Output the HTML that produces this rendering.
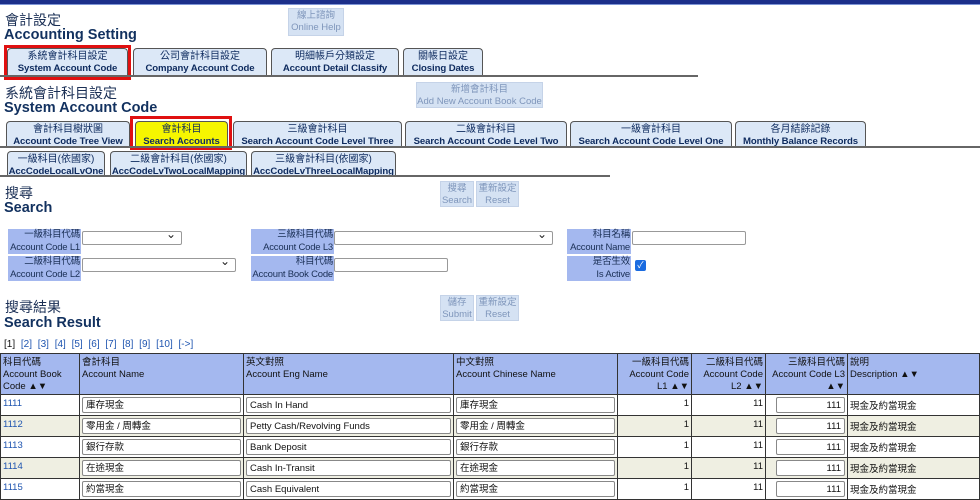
<!DOCTYPE html>
<html><head><meta charset="utf-8"><style>
*{box-sizing:border-box;margin:0;padding:0}
body{width:980px;height:495px;overflow:hidden;background:#fff;font-family:"Liberation Sans","Noto Sans CJK TC",sans-serif;color:#0d2a5e;position:relative}
.a{position:absolute}
.h1{font-size:14px;color:#1a2f55}
.h2{font-size:14.5px;font-weight:bold;color:#12315f}
.tab{position:absolute;background:#dce8f7;border:1px solid #555;border-bottom:none;border-radius:4px 4px 0 0;text-align:center;color:#0d2a5e;line-height:12px;padding-top:2px;white-space:nowrap;overflow:hidden}
.tab .c{font-size:10px}
.tab .e{font-size:9.6px;font-weight:bold;letter-spacing:-0.1px}
.red{position:absolute;border:3px solid #e01010}
.btn{position:absolute;background:#d5e2f3;border:1px solid #c5d3e8;color:#7f96bb;font-size:9.5px;text-align:center;line-height:12px;padding-top:1px;white-space:nowrap}
.line{position:absolute;height:2px;background:#666}
.lab{position:absolute;background:#a4b8ef;font-size:9.5px;text-align:right;color:#1a2f55;line-height:12.5px;padding-right:1px;white-space:nowrap;letter-spacing:-0.2px}
.inp{position:absolute;border:1px solid #999;border-radius:2px;background:#fff;height:14px}
.sel::after{content:"⌄";position:absolute;right:5px;top:-5px;font-size:12px;color:#222}
table{position:absolute;left:0;top:353px;border-collapse:collapse;table-layout:fixed;width:979px}
td,th{border:1px solid #333;font-size:9.5px;font-weight:normal;vertical-align:top;padding:1px 2px;color:#111;text-align:left;white-space:nowrap;overflow:hidden}
th{background:#a4b8ef;height:41px;line-height:12px;padding-top:3px}
th.r{text-align:right}
td{height:21px;padding-top:3px}
tr.alt td{background:#efefe2}
td a{color:#1f55b0;text-decoration:none}
.ti{border:1px solid #888;border-radius:2px;height:16px;background:#fff;font-size:9.5px;padding:2px 3px;margin-top:-1px;line-height:11px}
.num{text-align:right}
</style></head><body>
<div class="a" style="left:0;top:0;width:980px;height:4px;background:#1c2f8a"></div>
<div class="a" style="left:0;top:4px;width:980px;height:1px;background:#7e95d6"></div>

<div class="a h1" style="left:5px;top:10px">會計設定</div>
<div class="a h2" style="left:4px;top:27px">Accounting Setting</div>
<div class="btn" style="left:288px;top:8px;width:56px;height:28px">線上諮詢<br>Online Help</div>

<div class="tab" style="left:7px;top:48px;width:121px;height:29px"><div class="c">系統會計科目設定</div><div class="e">System Account Code</div></div>
<div class="red" style="left:4px;top:45px;width:127px;height:35px"></div>
<div class="tab" style="left:133px;top:48px;width:134px;height:29px"><div class="c">公司會計科目設定</div><div class="e">Company Account Code</div></div>
<div class="tab" style="left:271px;top:48px;width:128px;height:29px"><div class="c">明細帳戶分類設定</div><div class="e">Account Detail Classify</div></div>
<div class="tab" style="left:403px;top:48px;width:80px;height:29px"><div class="c">關帳日設定</div><div class="e">Closing Dates</div></div>
<div class="line" style="left:0;top:75px;width:698px"></div>

<div class="a h1" style="left:5px;top:83px">系統會計科目設定</div>
<div class="a h2" style="left:4px;top:100px">System Account Code</div>
<div class="btn" style="left:416px;top:82px;width:127px;height:26px">新增會計科目<br>Add New Account Book Code</div>

<div class="tab" style="left:6px;top:121px;width:124px;height:27px"><div class="c">會計科目樹狀圖</div><div class="e">Account Code Tree View</div></div>
<div class="tab" style="left:135px;top:121px;width:93px;height:27px;background:#f6f600"><div class="c">會計科目</div><div class="e">Search Accounts</div></div>
<div class="red" style="left:130px;top:116px;width:102px;height:34px"></div>
<div class="tab" style="left:233px;top:121px;width:169px;height:27px"><div class="c">三級會計科目</div><div class="e">Search Account Code Level Three</div></div>
<div class="tab" style="left:405px;top:121px;width:162px;height:27px"><div class="c">二級會計科目</div><div class="e">Search Account Code Level Two</div></div>
<div class="tab" style="left:570px;top:121px;width:162px;height:27px"><div class="c">一級會計科目</div><div class="e">Search Account Code Level One</div></div>
<div class="tab" style="left:735px;top:121px;width:131px;height:27px"><div class="c">各月結餘記錄</div><div class="e">Monthly Balance Records</div></div>
<div class="line" style="left:0;top:146px;width:980px"></div>

<div class="tab" style="left:7px;top:151px;width:98px;height:26px"><div class="c">一級科目(依國家)</div><div class="e">AccCodeLocalLvOne</div></div>
<div class="tab" style="left:110px;top:151px;width:137px;height:26px"><div class="c">二級會計科目(依國家)</div><div class="e">AccCodeLvTwoLocalMapping</div></div>
<div class="tab" style="left:251px;top:151px;width:145px;height:26px"><div class="c">三級會計科目(依國家)</div><div class="e">AccCodeLvThreeLocalMapping</div></div>
<div class="line" style="left:0;top:175px;width:610px"></div>

<div class="a h1" style="left:5px;top:183px">搜尋</div>
<div class="a h2" style="left:4px;top:200px">Search</div>
<div class="btn" style="left:440px;top:181px;width:34px;height:26px">搜尋<br>Search</div>
<div class="btn" style="left:476px;top:181px;width:43px;height:26px">重新設定<br>Reset</div>

<div class="lab" style="left:8px;top:229px;width:73px;height:25px">一級科目代碼<br>Account Code L1</div>
<div class="inp sel" style="left:82px;top:231px;width:100px"></div>
<div class="lab" style="left:8px;top:256px;width:73px;height:25px">二級科目代碼<br>Account Code L2</div>
<div class="inp sel" style="left:82px;top:258px;width:154px"></div>
<div class="lab" style="left:251px;top:229px;width:83px;height:25px">三級科目代碼<br>Account Code L3</div>
<div class="inp sel" style="left:334px;top:231px;width:219px"></div>
<div class="lab" style="left:251px;top:256px;width:83px;height:25px">科目代碼<br>Account Book Code</div>
<div class="inp" style="left:334px;top:258px;width:114px"></div>
<div class="lab" style="left:567px;top:229px;width:64px;height:25px">科目名稱<br>Account Name</div>
<div class="inp" style="left:632px;top:231px;width:114px"></div>
<div class="lab" style="left:567px;top:256px;width:64px;height:25px">是否生效<br>Is Active</div>
<div class="a" style="left:635px;top:260px;width:11px;height:11px;background:#1a6be0;border-radius:2px;color:#fff;font-size:9px;line-height:11px;text-align:center">✓</div>

<div class="a h1" style="left:5px;top:297px">搜尋結果</div>
<div class="a h2" style="left:4px;top:315px">Search Result</div>
<div class="btn" style="left:440px;top:295px;width:34px;height:26px">儲存<br>Submit</div>
<div class="btn" style="left:476px;top:295px;width:43px;height:26px">重新設定<br>Reset</div>

<div class="a" style="left:4px;top:339px;font-size:10px;color:#1f55b0;word-spacing:3px"><span style="color:#111">[1]</span> [2] [3] [4] [5] [6] [7] [8] [9] [10] [-&gt;]</div>

<table>
<colgroup><col style="width:79px"><col style="width:164px"><col style="width:210px"><col style="width:164px"><col style="width:74px"><col style="width:74px"><col style="width:82px"><col style="width:132px"></colgroup>
<tr><th>科目代碼<br>Account Book<br>Code ▲▼</th><th>會計科目<br>Account Name</th><th>英文對照<br>Account Eng Name</th><th>中文對照<br>Account Chinese Name</th><th class="r">一級科目代碼<br>Account Code<br>L1 ▲▼</th><th class="r">二級科目代碼<br>Account Code<br>L2 ▲▼</th><th class="r">三級科目代碼<br>Account Code L3<br>▲▼</th><th>說明<br>Description ▲▼</th></tr>
<tr><td><a>1111</a></td><td><div class="ti">庫存現金</div></td><td><div class="ti">Cash In Hand</div></td><td><div class="ti">庫存現金</div></td><td class="num">1</td><td class="num">11</td><td><div class="ti num" style="margin-left:8px">111</div></td><td>現金及約當現金</td></tr>
<tr class="alt"><td><a>1112</a></td><td><div class="ti">零用金 / 周轉金</div></td><td><div class="ti">Petty Cash/Revolving Funds</div></td><td><div class="ti">零用金 / 周轉金</div></td><td class="num">1</td><td class="num">11</td><td><div class="ti num" style="margin-left:8px">111</div></td><td>現金及約當現金</td></tr>
<tr><td><a>1113</a></td><td><div class="ti">銀行存款</div></td><td><div class="ti">Bank Deposit</div></td><td><div class="ti">銀行存款</div></td><td class="num">1</td><td class="num">11</td><td><div class="ti num" style="margin-left:8px">111</div></td><td>現金及約當現金</td></tr>
<tr class="alt"><td><a>1114</a></td><td><div class="ti">在途現金</div></td><td><div class="ti">Cash In-Transit</div></td><td><div class="ti">在途現金</div></td><td class="num">1</td><td class="num">11</td><td><div class="ti num" style="margin-left:8px">111</div></td><td>現金及約當現金</td></tr>
<tr><td><a>1115</a></td><td><div class="ti">約當現金</div></td><td><div class="ti">Cash Equivalent</div></td><td><div class="ti">約當現金</div></td><td class="num">1</td><td class="num">11</td><td><div class="ti num" style="margin-left:8px">111</div></td><td>現金及約當現金</td></tr>
</table>
</body></html>
